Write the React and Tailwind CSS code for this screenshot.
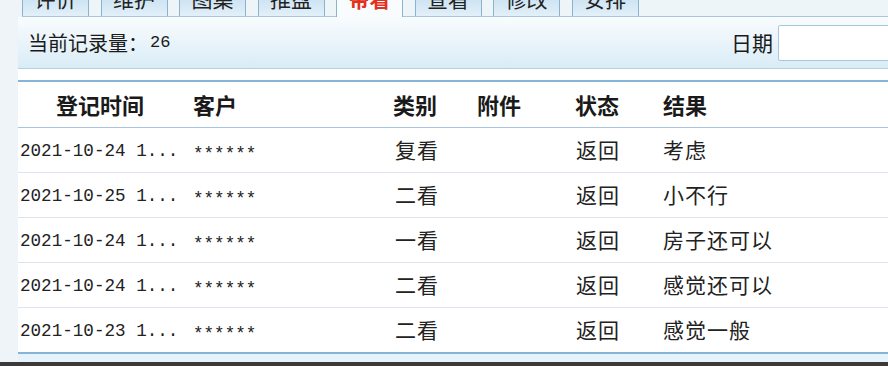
import React from "react";

const cjk = { fontFamily: '"Noto Sans CJK SC", "Noto Sans", sans-serif' };
const mono = { fontFamily: '"Liberation Mono", "Noto Sans CJK SC", monospace' };

const tabs = ["评价", "维护", "图集", "推盘", "带看", "查看", "修改", "安排"];

const rows = [
  { time: "2021-10-24 1...", kind: "复看", state: "返回", result: "考虑" },
  { time: "2021-10-25 1...", kind: "二看", state: "返回", result: "小不行" },
  { time: "2021-10-24 1...", kind: "一看", state: "返回", result: "房子还可以" },
  { time: "2021-10-24 1...", kind: "二看", state: "返回", result: "感觉还可以" },
  { time: "2021-10-23 1...", kind: "二看", state: "返回", result: "感觉一般" },
];

const cols = "grid grid-cols-[175px_200px_84px_98px_88px_1fr]";

export default function App() {
  return (
    <div
      className="w-[888px] h-[366px] overflow-hidden bg-[#eef4f8] flex flex-col text-[#1a1a1a]"
      style={cjk}
    >
      {/* tab strip, tops cut off */}
      <div className="h-[17px] flex pl-[22px]">
        <div className="flex-1 flex items-end gap-[11.5px] border-b border-[#a9c6da] bg-[#eef5f9]">
          {tabs.map((t, i) =>
            i === 4 ? (
              <div
                key={t}
                className="relative z-10 w-[67px] h-[17px] -mb-px overflow-hidden flex items-end justify-center pb-[8px] border-x border-[#8db3cc] bg-[#f9fcfe]"
              >
                <span className="text-[21px] leading-[21px] font-bold text-[#e2301c]">{t}</span>
              </div>
            ) : (
              <div
                key={t}
                className="w-[67px] h-[16px] overflow-hidden flex items-end justify-center pb-[7px] border-x border-[#8db3cc] bg-gradient-to-b from-[#cfe4f3] to-[#e2f0f9]"
              >
                <span className="text-[21px] leading-[21px] text-[#222]">{t}</span>
              </div>
            )
          )}
        </div>
      </div>

      {/* toolbar */}
      <div className="ml-[18px] h-[52px] flex items-center pl-[10px] border-b border-[#b5d2e4] bg-gradient-to-b from-[#f9fcfe] to-[#d9ecf6]">
        <span className="text-[20px] leading-none">当前记录量：</span>
        <span className="text-[17px] leading-none ml-[2px]" style={mono}>26</span>
        <div className="ml-auto -mr-[12px] flex items-center">
          <span className="text-[21px] leading-none">日期</span>
          <div className="ml-[5px] w-[122px] h-[36px] bg-white border border-[#a7c7dd] rounded-[2px]" />
        </div>
      </div>

      <div className="ml-[18px] h-[11px] bg-white" />

      {/* table */}
      <div className="ml-[18px] bg-white border-t-2 border-[#84b4d8]">
        <div className={`${cols} h-[46px] items-center border-b border-[#a8c4e0] text-[22px] font-bold`}>
          <div className="text-center pr-[11px]">登记时间</div>
          <div>客户</div>
          <div>类别</div>
          <div>附件</div>
          <div>状态</div>
          <div>结果</div>
        </div>
        {rows.map((r, i) => (
          <div
            key={i}
            className={`${cols} items-center ${
              i < rows.length - 1 ? "h-[45px] border-b border-[#dde4ee]" : "h-[44px]"
            }`}
          >
            <div className="pl-[2px] pt-[2px] text-[17.6px] text-[#222]" style={mono}>{r.time}</div>
            <div className="pt-[8px] text-[17.6px] text-[#222]" style={mono}>******</div>
            <div className="pl-[2px] text-[21px] tracking-[1px] text-[#222]">{r.kind}</div>
            <div />
            <div className="pl-[1px] text-[21px] tracking-[1px] text-[#222]">{r.state}</div>
            <div className="text-[21px] tracking-[1px] text-[#222]">{r.result}</div>
          </div>
        ))}
      </div>

      <div className="ml-[18px] border-t-2 border-[#84b4d8] h-[10px] bg-[#e6f3fa]" />
      <div className="h-[4px] bg-[#3a3a3a]" />
    </div>
  );
}
